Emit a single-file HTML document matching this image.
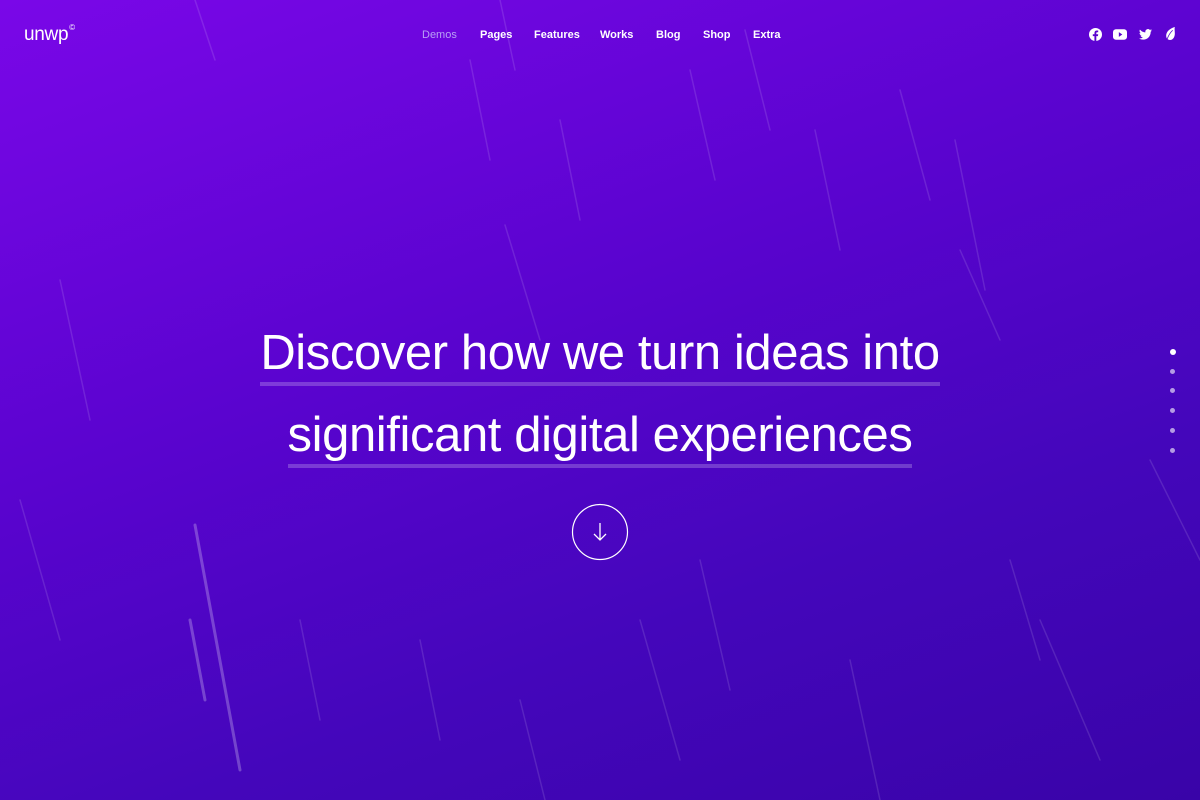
<!DOCTYPE html>
<html><head><meta charset="utf-8"><style>
html,body{margin:0;padding:0}
body{width:1200px;height:800px;overflow:hidden;position:relative;font-family:"Liberation Sans",sans-serif;
background:linear-gradient(160deg,#7a07e8 0%,#5a04cf 40%,#4406bb 70%,#3904a8 100%);color:#fff}
.logo{position:absolute;left:24px;top:24px;font-size:19px;letter-spacing:-0.3px}
.logo sup{font-size:8px;font-weight:normal;position:relative;top:-3px;margin-left:1px}
nav{position:absolute;top:29px;left:422px;font-size:11px;font-weight:bold}
nav span{position:absolute;white-space:nowrap}
.soc{position:absolute;top:28px}
h1{position:absolute;left:0;width:1200px;text-align:center;font-weight:normal;margin:0;font-size:49px;letter-spacing:-0.4px;line-height:1}
h1 span{display:inline-block;padding-bottom:4px;border-bottom:4px solid rgba(255,255,255,0.22)}
.dots i{position:absolute;left:1170px;width:5px;height:5px;border-radius:50%;background:rgba(255,255,255,0.6)}
</style></head><body>
<svg width="1200" height="800" style="position:absolute;left:0;top:0" stroke="#fff" stroke-linecap="round">
<g stroke-opacity="0.12" stroke-width="1.5">
<line x1="195" y1="0" x2="215" y2="60"/><line x1="500" y1="0" x2="515" y2="70"/>
<line x1="470" y1="60" x2="490" y2="160"/><line x1="505" y1="225" x2="540" y2="340"/>
<line x1="955" y1="140" x2="985" y2="290"/><line x1="745" y1="30" x2="770" y2="130"/>
<line x1="900" y1="90" x2="930" y2="200"/><line x1="815" y1="130" x2="840" y2="250"/>
<line x1="960" y1="250" x2="1000" y2="340"/><line x1="1040" y1="620" x2="1100" y2="760"/>
<line x1="640" y1="620" x2="680" y2="760"/><line x1="700" y1="560" x2="730" y2="690"/>
<line x1="420" y1="640" x2="440" y2="740"/><line x1="850" y1="660" x2="880" y2="800"/>
<line x1="1150" y1="460" x2="1200" y2="560"/><line x1="60" y1="280" x2="90" y2="420"/>
<line x1="20" y1="500" x2="60" y2="640"/><line x1="300" y1="620" x2="320" y2="720"/>
<line x1="520" y1="700" x2="545" y2="800"/><line x1="560" y1="120" x2="580" y2="220"/>
<line x1="690" y1="70" x2="715" y2="180"/><line x1="1010" y1="560" x2="1040" y2="660"/>
</g>
<g stroke-opacity="0.25" stroke-width="3">
<line x1="195" y1="525" x2="240" y2="770"/>
<line x1="190" y1="620" x2="205" y2="700"/>
</g>
</svg>
<div class="logo">unwp<sup>©</sup></div>
<nav>
<span style="left:0;color:#b9a0f5;font-weight:normal">Demos</span>
<span style="left:58px">Pages</span>
<span style="left:112px">Features</span>
<span style="left:178px">Works</span>
<span style="left:234px">Blog</span>
<span style="left:281px">Shop</span>
<span style="left:331px">Extra</span>
</nav>
<svg class="soc" style="left:1089px" width="13" height="13" viewBox="0 0 24 24"><circle cx="12" cy="12" r="12" fill="#fff"/><path d="M13.5 24V15h3l.5-3.5h-3.5V9.5c0-1 .3-1.7 1.8-1.7H17V4.7c-.3 0-1.4-.2-2.6-.2-2.6 0-4.3 1.6-4.3 4.4v2.6H7V15h3v9z" fill="#5a04cf"/></svg>
<svg class="soc" style="left:1113px;top:29px" width="14" height="11" viewBox="0 0 24 18"><rect width="24" height="18" rx="5" fill="#fff"/><path d="M10 5v8l6-4z" fill="#5a04cf"/></svg>
<svg class="soc" style="left:1139px;top:29px" width="13" height="11" viewBox="0 0 24 20"><path d="M24 2.4a10 10 0 0 1-2.8.8A5 5 0 0 0 23.3.4a10 10 0 0 1-3.1 1.2A4.9 4.9 0 0 0 11.8 6 14 14 0 0 1 1.7.9a4.9 4.9 0 0 0 1.5 6.6A4.9 4.9 0 0 1 1 6.9a4.9 4.9 0 0 0 3.9 4.8 5 5 0 0 1-2.2.1 4.9 4.9 0 0 0 4.6 3.4A9.9 9.9 0 0 1 0 17.3 14 14 0 0 0 7.5 19.5c9.1 0 14-7.5 14-14v-.6A10 10 0 0 0 24 2.4z" fill="#fff"/></svg>
<svg class="soc" style="left:1165px;top:27px" width="11" height="13" viewBox="0 0 20 24"><path d="M18 0C10 2 2 8 2 16c0 5 3 8 7 8 6 0 9-6 9-12 0-5-1-9 0-12z" fill="#fff"/><path d="M4 22c2-6 6-12 10-16" stroke="#5a04cf" stroke-width="1.5" fill="none"/></svg>
<h1 style="top:329px"><span>Discover how we turn ideas into</span></h1>
<h1 style="top:411px"><span>significant digital experiences</span></h1>
<svg style="position:absolute;left:571px;top:503px" width="58" height="58" viewBox="0 0 58 58"><circle cx="29" cy="29" r="27.5" fill="none" stroke="#fff" stroke-width="1.2"/><path d="M29 20v17M23 31l6 6 6-6" fill="none" stroke="#fff" stroke-width="1.3"/></svg>
<div class="dots">
<i style="top:349px;background:#fff;width:6px;height:6px;left:1170px"></i>
<i style="top:369px"></i><i style="top:388px"></i><i style="top:408px"></i><i style="top:428px"></i><i style="top:448px"></i>
</div>
</body></html>
